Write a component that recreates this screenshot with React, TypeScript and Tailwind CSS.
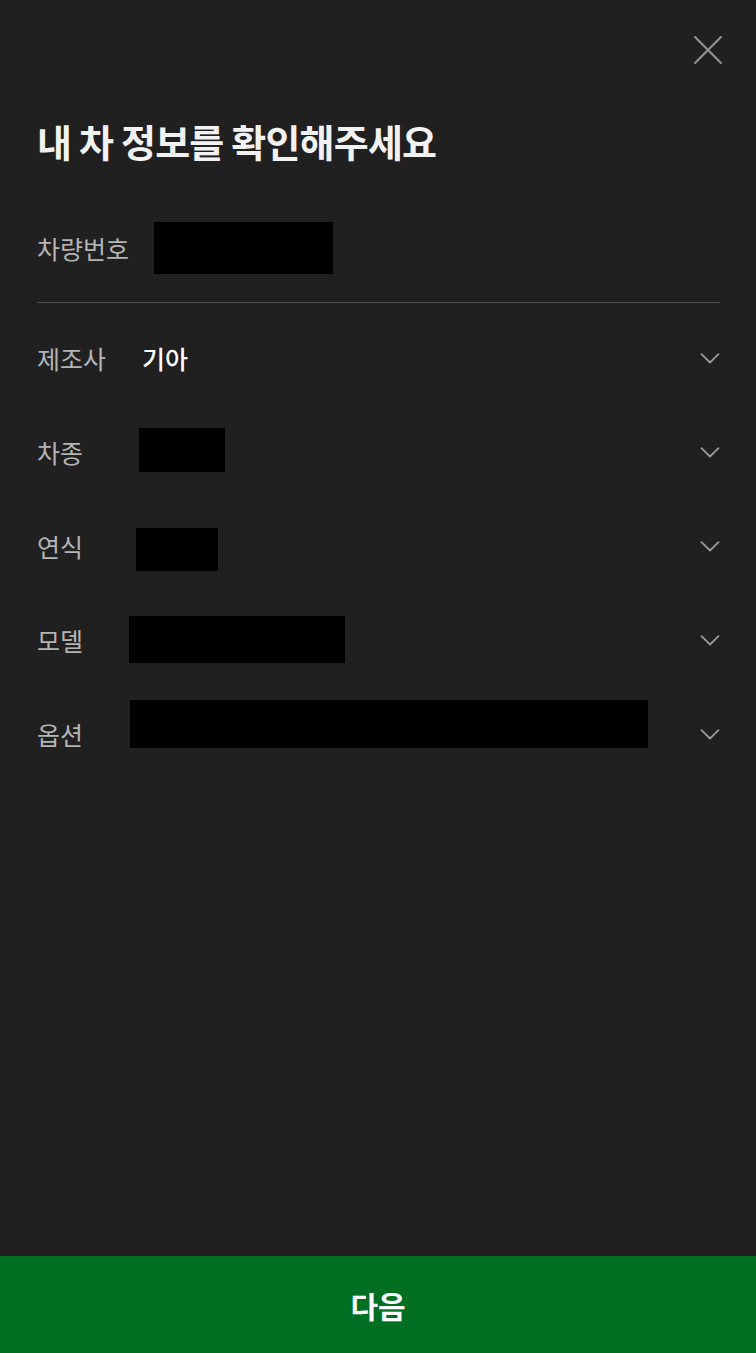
import React from "react";

const font = { fontFamily: '"Noto Sans CJK KR", "Noto Sans", sans-serif' };

function Chevron() {
  return (
    <svg width="20" height="11" viewBox="0 0 20 11" className="ml-auto shrink-0">
      <polyline points="1.5,1.2 10,9.5 18.5,1.2" fill="none" stroke="#9a9a9a" strokeWidth="1.8" strokeLinecap="round" strokeLinejoin="round" />
    </svg>
  );
}

export default function App() {
  return (
    <div className="w-full h-[1353px] bg-[#202020] flex flex-col" style={font}>
      <div className="h-[100px] flex justify-end pt-[36px] pr-[34px]">
        <svg width="28" height="28" viewBox="0 0 28 28">
          <line x1="1" y1="1" x2="27" y2="27" stroke="#8f8f8f" strokeWidth="2.2" strokeLinecap="round" />
          <line x1="27" y1="1" x2="1" y2="27" stroke="#8f8f8f" strokeWidth="2.2" strokeLinecap="round" />
        </svg>
      </div>
      <div className="h-[82px] flex items-center px-[37px]">
        <h1 className="text-[38px] font-bold text-[#f2f2f2] tracking-[-0.8px] leading-none">내 차 정보를 확인해주세요</h1>
      </div>
      <div className="mt-[14px] h-[104px] flex items-center px-[37px]">
        <span className="w-[117px] text-[25px] text-[#b4b4b4] leading-none">차량번호</span>
        <div className="w-[179px] h-[52px] bg-black" />
      </div>
      <div className="mt-[2px] mx-[37px] mr-[36px] border-t border-[#505050]" />
      <div className="mt-[8px] flex flex-col px-[37px] pr-[36px]">
        <div className="h-[94px] flex items-center">
          <span className="w-[105px] text-[25px] text-[#b4b4b4] leading-none">제조사</span>
          <span className="text-[25px] font-medium text-white leading-none">기아</span>
          <Chevron />
        </div>
        <div className="h-[94px] flex items-center">
          <span className="w-[105px] text-[25px] text-[#b4b4b4] leading-none">차종</span>
          <div className="ml-[-3px] mb-[4px] w-[86px] h-[44px] bg-black" />
          <Chevron />
        </div>
        <div className="h-[94px] flex items-center">
          <span className="w-[105px] text-[25px] text-[#b4b4b4] leading-none">연식</span>
          <div className="ml-[-6px] mt-[7px] w-[82px] h-[43px] bg-black" />
          <Chevron />
        </div>
        <div className="h-[94px] flex items-center">
          <span className="w-[105px] text-[25px] text-[#b4b4b4] leading-none">모델</span>
          <div className="ml-[-13px] mt-[-1px] w-[216px] h-[47px] bg-black" />
          <Chevron />
        </div>
        <div className="h-[94px] flex items-center">
          <span className="w-[105px] text-[25px] text-[#b4b4b4] leading-none">옵션</span>
          <div className="ml-[-12px] mb-[20px] w-[518px] h-[48px] bg-black" />
          <Chevron />
        </div>
      </div>
      <div className="flex-1" />
      <button className="h-[97px] w-full bg-[#006f22] flex items-center justify-center">
        <span className="text-[30px] font-bold text-white leading-none">다음</span>
      </button>
    </div>
  );
}
